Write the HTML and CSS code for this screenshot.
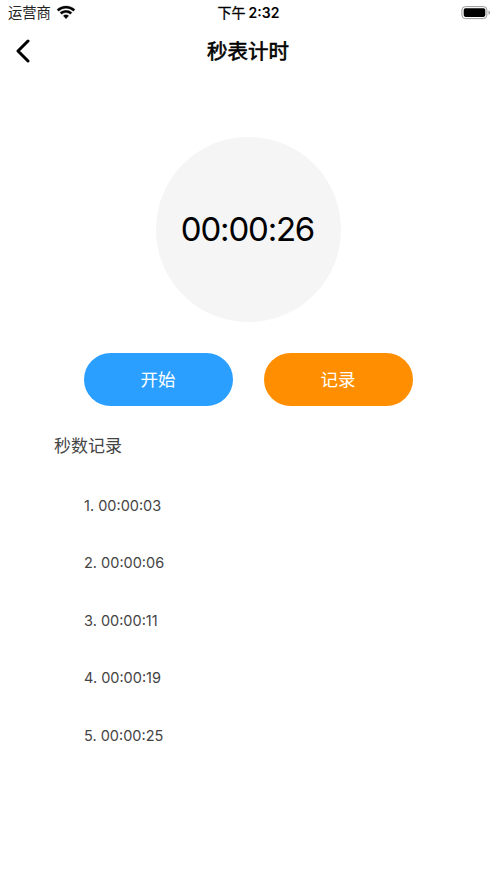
FILE: index.html
```html
<!DOCTYPE html>
<html lang="zh-CN">
<head>
<meta charset="utf-8">
<title>秒表计时</title>
<link rel="stylesheet" href="styles.css">
</head>
<body>
<div class="status">
  <div class="carrier"><span>运营商</span>
    <svg class="wifi" width="18" height="13" viewBox="0 0 18 13"><path d="M9 0C5.500 0 2.300 1.300 0 3.500l1.600 1.700a10.800 10.800 0 0 1 14.800 0L18 3.500C15.700 1.300 12.500 0 9 0Z"/><path d="M9 4.300c-2.300 0-4.400.9-6 2.300l1.700 1.700a6.300 6.300 0 0 1 8.600 0L15 6.600a8.800 8.800 0 0 0-6-2.300Z"/><path d="M9 8.700c-1.100 0-2 .4-2.700 1.100L9 12.800l2.700-3c-.7-.7-1.600-1.100-2.700-1.100Z"/></svg>
  </div>
  <div class="clock"><span class="period">下午</span><span class="digits">2:32</span></div>
  <svg class="battery" width="30" height="14" viewBox="0 0 30 14"><rect class="shell" x=".9" y=".6" width="25" height="12" rx="3.500"/><rect x="2.700" y="2.300" width="21.600" height="8.600" rx="1.800"/><path class="tip" d="M27.500 4.600c2 .6 2 3.600 0 4.200Z"/></svg>
</div>
<header class="nav">
  <svg class="back" width="14" height="24" viewBox="0 0 14 24"><path d="M12 2 2 12l10 10"/></svg>
  <h1>秒表计时</h1>
</header>
<main>
  <div class="dial"><span>00:00:26</span></div>
  <div class="actions"><button class="start"><span>开始</span></button><button class="record"><span>记录</span></button></div>
  <h2>秒数记录</h2>
  <div class="records">
    <div><span>1. 00:00:03</span></div>
    <div><span>2. 00:00:06</span></div>
    <div><span>3. 00:00:11</span></div>
    <div><span>4. 00:00:19</span></div>
    <div><span>5. 00:00:25</span></div>
  </div>
</main>
</body>
</html>
```
FILE: styles.css
```css
* { box-sizing: border-box; }
body { margin: 0; height: 883px; overflow: hidden; background: #fff; color: #000; font-family: Inter, "Noto Sans CJK SC", sans-serif; }
.status { height: 26px; display: grid; grid-template-columns: 1fr auto 1fr; align-items: center; padding: 0 6px 0 8px; font-size: 14.300px; line-height: 26px; }
.carrier { display: flex; align-items: center; gap: 6px; color: #222; }
.wifi { margin-bottom: 2px; fill: #000; stroke: #000; stroke-width: .3; overflow: visible; }
.clock { display: flex; gap: 3px; margin-right: 2px; font-size: 14px; font-weight: 600; }
.period { font-weight: 400; -webkit-text-stroke: .3px #000; }
.battery { justify-self: end; margin-bottom: 1px; }
.shell { fill: none; stroke: #999; }
.tip { fill: #999; }
.nav { height: 50px; display: grid; grid-template-columns: 1fr auto 1fr; align-items: center; padding: 0 16px; }
.back { fill: none; stroke: #000; stroke-width: 3; stroke-linecap: round; stroke-linejoin: round; }
h1 { margin: 2px 1px 0 0; font-size: 20.500px; line-height: 30px; font-weight: 400; -webkit-text-stroke: .6px #000; }
.dial { width: 184.500px; height: 184.500px; margin: 61px auto 0; padding: 0 2px 1px 0; border-radius: 50%; background: #f5f5f5; display: flex; align-items: center; justify-content: center; font-size: 33px; font-weight: 400; letter-spacing: -1.200px; }
.actions { display: flex; gap: 31px; justify-content: center; margin-top: 31px; }
button { width: 149px; height: 53px; padding: 0 1px 0 0; border: 0; border-radius: 27px; color: #fff; font: 400 17.500px/53px Inter, "Noto Sans CJK SC", sans-serif; }
.start { background: #2b9fff; }
.record { background: #ff8f00; }
h2 { margin: 24px 0 0 54px; font-size: 17px; line-height: 32px; font-weight: 400; color: #444; }
.records { margin: 15px 0 0 84px; font-size: 14.500px; color: #444; }
.records div { height: 57.500px; line-height: 57.500px; }
```
